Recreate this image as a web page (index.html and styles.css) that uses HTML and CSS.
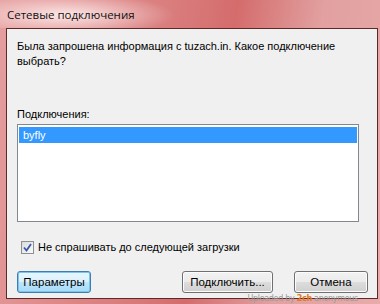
FILE: index.html
```html
<!DOCTYPE html>
<html>

<head>
    <title>Сетевые подключения</title>
    <link rel="stylesheet" href="styles.css">
</head>

<body>
    <div class="window">
        <div class="titlebar">
            <span class="title">Сетевые подключения</span>
        </div>
        <div class="client">
            <p class="message">Была запрошена информация с tuzach.in. Какое подключение выбрать?</p>
            <div class="label">Подключения:</div>
            <div class="listbox">
                <div class="item selected">byfly</div>
            </div>
            <label class="check-row">
                <span class="checkbox">
                    <svg width="9" height="9" viewBox="0 0 9 9">
                        <path d="M1 4.5 L3.5 7.5 L8 1" fill="none" stroke="#3a57a8" stroke-width="1.8"/>
                    </svg>
                </span>
                Не спрашивать до следующей загрузки
            </label>
            <div class="buttons">
                <button class="btn default">Параметры</button>
                <div class="spacer"></div>
                <button class="btn wide">Подключить...</button>
                <button class="btn">Отмена</button>
            </div>
        </div>
        <div class="watermark">Uploaded by <b>2ch</b> anonymous</div>
    </div>
</body>
</html>
```

FILE: styles.css
```css
body{
    margin: 0;
    width: 380px;
    height: 304px;
    overflow: hidden;
    font-family: "Liberation Sans", Arial, sans-serif;
    font-size: 11px;
    color: #000;
}

.window{
    position: relative;
    width: 380px;
    height: 304px;
    display: flex;
    flex-direction: column;
    background: linear-gradient(100deg, #e59e9e 0%, #d87878 45%, #d46c6c 55%, #e2a0a0 75%, #e8aaaa 100%);
}

.titlebar{
    height: 28px;
    display: flex;
    align-items: center;
    padding-left: 7px;
    background: radial-gradient(ellipse 110px 22px at 65px 15px, rgba(255, 240, 240, 0.9), rgba(255, 240, 240, 0) 100%);
}

.title{
    font-family: "Open Sans", "DejaVu Sans", sans-serif;
    font-size: 11.5px;
    color: #111;
    margin-top: 1px;
}

.client{
    margin: 0 2px 5px 6px;
    flex: 1;
    background-color: #f0f0f0;
    border: 1px solid #5b2a2a;
    padding: 0 18px 0 10px;
    display: flex;
    flex-direction: column;
}

.message{
    margin: 10px 0 0 0;
    line-height: 15px;
    width: 330px;
}

.label{
    margin-top: 38px;
    line-height: 15px;
}

.listbox{
    margin-top: 2px;
    height: 92px;
    border: 1px solid #828790;
    background-color: #fff;
    padding: 2px 1px;
}

.item{
    height: 16px;
    line-height: 16px;
    padding-left: 4px;
}

.selected{
    background-color: #3399ff;
    color: #fff;
}

.check-row{
    margin-top: 18px;
    margin-left: 4px;
    display: flex;
    align-items: center;
    gap: 4px;
    line-height: 14px;
}

.checkbox{
    width: 11px;
    height: 11px;
    border: 1px solid #8e8f8f;
    background: linear-gradient(135deg, #dcdcdc, #fafafa);
    display: flex;
    align-items: center;
    justify-content: center;
}

.buttons{
    margin-top: 17px;
    margin-right: -9px;
    display: flex;
    gap: 21px;
}

.spacer{
    flex: 1;
}

.btn{
    width: 74px;
    height: 22px;
    padding: 0;
    font-family: "Liberation Sans", Arial, sans-serif;
    font-size: 11.5px;
    color: #000;
    border: 1px solid #707070;
    border-radius: 3px;
    background: linear-gradient(#f2f2f2 0%, #ebebeb 50%, #dddddd 51%, #cfcfcf 100%);
    box-shadow: inset 0 0 0 1px #fcfcfc;
}

.wide{
    width: 91px;
}

.default{
    border-color: #3c7fb1;
    background: linear-gradient(#eaf6fd 0%, #d9f0fc 50%, #bee6fd 51%, #a7d9f5 100%);
    box-shadow: inset 0 0 0 1px #7cc4ee;
}

.watermark{
    position: absolute;
    right: 22px;
    bottom: 1px;
    font-family: "DejaVu Sans", sans-serif;
    font-size: 8px;
    color: #9a9a9a;
    letter-spacing: -0.3px;
}

.watermark b{
    color: #e07a2a;
}
```
